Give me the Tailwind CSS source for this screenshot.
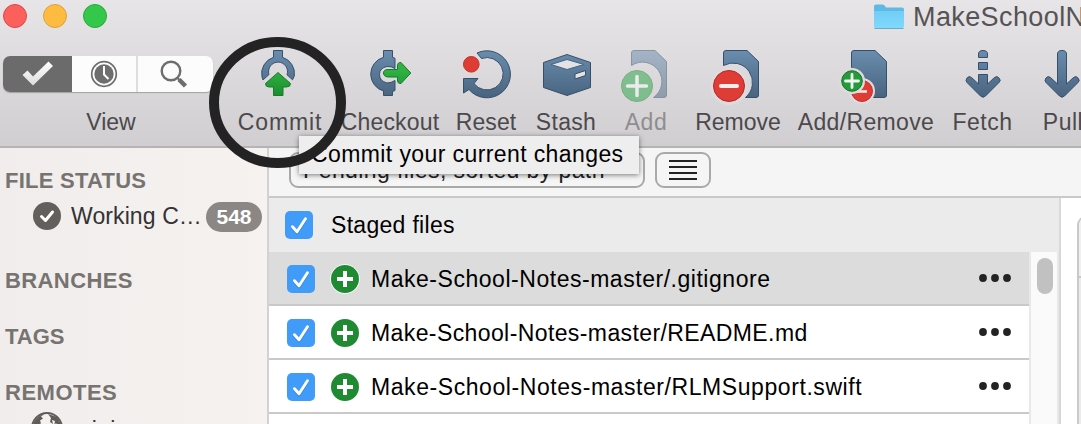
<!DOCTYPE html>
<html lang="en">
<head>
<meta charset="utf-8">
<title>MakeSchoolNotes</title>
<script src="https://cdn.jsdelivr.net/npm/@tailwindcss/browser@4"></script>
</head>
<body class="relative w-[1081px] h-[424px] overflow-hidden bg-white font-['Liberation_Sans',Arial,sans-serif] text-[23px] leading-7 text-black whitespace-nowrap">
<svg class="absolute w-0 h-0" aria-hidden="true">
  <defs>
    <linearGradient id="blue" gradientUnits="userSpaceOnUse" x1="0" y1="50" x2="0" y2="98"><stop offset="0" stop-color="#6a8dae"/><stop offset="1" stop-color="#48637f"/></linearGradient>
    <linearGradient id="green" gradientUnits="userSpaceOnUse" x1="0" y1="70" x2="0" y2="98"><stop offset="0" stop-color="#2fb243"/><stop offset="1" stop-color="#188a2a"/></linearGradient>
    <linearGradient id="folder" x1="0" y1="0" x2="0" y2="1"><stop offset="0" stop-color="#72cdf7"/><stop offset="1" stop-color="#7fd9fc"/></linearGradient>
    <linearGradient id="tick" x1="0" y1="0" x2="0" y2="1"><stop offset="0" stop-color="#fff"/><stop offset="1" stop-color="#dcdcdc"/></linearGradient>
    <symbol id="checkbox" viewBox="0 0 28 28"><rect width="28" height="28" rx="5" fill="#419bf9"/><path d="M7.5 17 12 22 20.5 9" fill="none" stroke="#1f74cf" stroke-opacity=".5" stroke-width="3" stroke-linecap="round" stroke-linejoin="round"/><path d="M7.5 15.700 12 20.800 20.500 7.800" fill="none" stroke="#fff" stroke-width="2.900" stroke-linecap="round" stroke-linejoin="round"/></symbol>
    <symbol id="plus" viewBox="0 0 30 30"><circle cx="15" cy="15" r="14.800" fill="#fff"/><circle cx="15" cy="15" r="14" fill="#208a33"/><path d="M15 7v16M7 15h16" stroke="#fff" stroke-width="4"/></symbol>
    <symbol id="dots" viewBox="0 0 32 8"><g fill="#232323"><circle cx="4" cy="4" r="3.900"/><circle cx="16" cy="4" r="3.900"/><circle cx="28" cy="4" r="3.900"/></g></symbol>
  </defs>
</svg>

<div class="flex h-full flex-col">
  <header class="h-[148px] shrink-0 overflow-hidden border-b-2 border-[#b5b3b5] bg-linear-to-b from-[#e7e5e7] to-[#d0ced1] text-[#4b494b]">
    <div class="flex h-[46px] items-start">
      <div class="flex gap-4 pl-[3px] pt-1">
        <span class="size-6 rounded-full border border-[#e2463f] bg-[#fc605c]"></span>
        <span class="size-6 rounded-full border border-[#dfa03a] bg-[#fdbc40]"></span>
        <span class="size-6 rounded-full border border-[#27ab35] bg-[#34c84a]"></span>
      </div>
      <div class="ml-[766px] flex">
        <svg class="mt-[3px] h-[26px] w-8 shrink-0" viewBox="0 0 32 26"><path d="M1 3.500Q1 1.500 3 1.500h6.500Q11 1.500 12 3l1 1.500h16q2 0 2 2V10H1z" fill="#5fb9e4"/><path d="M1 8h30v15.500q0 1.500-1.500 1.500h-27Q1 25 1 23.500z" fill="url(#folder)"/><path d="M1.500 25.500h29" stroke="#6fa9c4" stroke-width="1"/></svg>
        <span class="ml-2 mt-px text-[27px] leading-8 tracking-[0.4px] text-[#555355]">MakeSchoolNotes</span>
      </div>
    </div>
    <div class="flex h-[90px]">
      <div class="flex w-[232px] shrink-0 flex-col pl-[3px] pt-[10px]">
        <div class="flex h-9 w-[210px] overflow-hidden rounded-[7px] bg-[#fcfcfc] shadow-[0_1px_1px_rgba(0,0,0,0.25)]">
          <span class="w-[69px] bg-[#6b6b6b]"><svg class="size-full" viewBox="3 56 69 36"><path d="M22.500 75 27.500 70.500 33 76.500 48.500 61.500 53 66 33 85.500z" fill="url(#tick)"/></svg></span>
          <span class="w-[66px] border-r-2 border-[#dedede]"><svg class="size-full" viewBox="72 56 64 36"><circle cx="104" cy="74" r="12.300" fill="none" stroke="#6e6e6e" stroke-width="1.700"/><circle cx="104" cy="74" r="9.700" fill="#6e6e6e"/><path d="M104 66v8.500l4.500 4.500" stroke="#fcfcfc" stroke-width="2" fill="none"/></svg></span>
          <span class="w-[75px]"><svg class="size-full" viewBox="138 56 75 36"><circle cx="171" cy="71" r="9.300" fill="none" stroke="#6e6e6e" stroke-width="2.400"/><path d="m177.500 78 2.500 2.500" stroke="#6e6e6e" stroke-width="2"/><path d="m179 79.500 6.500 6.500" stroke="#6e6e6e" stroke-width="4.500"/></svg></span>
        </div>
        <span class="mt-4 w-[216px] text-center">View</span>
      </div>
      <div class="flex w-24 shrink-0 flex-col items-center">
        <svg class="h-[62px] w-14 shrink-0" viewBox="252 46 56 62"><path d="M273.500 50.500h9v6.800A17 17 0 0 1 294.300 76l-1.800 3.800-5.500-5A9.500 9.500 0 1 0 269 74.500l-6 5.500-1-3A17 17 0 0 1 273.500 57.300z" fill="url(#blue)" stroke="#365069"/><path d="M278 72.500 290.500 83.500Q290.500 87 286.500 87h-3.500v8.500h-9.500V87H269Q265.500 87 265.500 83.500z" fill="url(#green)" stroke="#187b29" stroke-linejoin="round"/></svg>
        <span class="tracking-[0.9px]">Commit</span>
      </div>
      <div class="flex w-[124px] shrink-0 flex-col items-center">
        <svg class="h-[62px] w-14 shrink-0" viewBox="362 46 56 62"><path d="M383.500 50.500h9v6.800l2.500 1v10.200q-4-2.500-8-2-7.500 1.500-7.500 8t7.500 8.500q4 0 8-2.500v10l-2.500 1v4h-9v-4.500A17.500 17.500 0 0 1 383.500 57.300z" fill="url(#blue)" stroke="#365069"/><path d="M388 69.500h9.500V66q0-4 3.500-3.500L410.800 73 401 83.500q-3.500.5-3.500-3.500V77H388q-4.500-.5-4.500-4t4.500-3.500z" fill="url(#green)" stroke="#187b29" stroke-linejoin="round"/></svg>
        <span class="tracking-[0.15px]">Checkout</span>
      </div>
      <div class="flex w-[68px] shrink-0 flex-col items-center">
        <svg class="h-[62px] w-14 shrink-0" viewBox="458 46 56 62"><path d="M477 53A23.500 23.500 0 1 1 469 89.500L463.500 93V78.500h14.500L474 83.500A16.200 16.200 0 1 0 481.500 58.500z" fill="url(#blue)" stroke="#365069" stroke-linejoin="round"/><circle cx="471.300" cy="64.300" r="7.800" fill="#df3d33" stroke="#c32e28"/></svg>
        <span class="tracking-[0.1px]">Reset</span>
      </div>
      <div class="flex w-[92px] shrink-0 flex-col items-center">
        <svg class="h-[62px] w-14 shrink-0" viewBox="538 46 56 62"><path d="M567 54.500 590.500 62.500V87.500L567 95.500 543.500 87.500V62.500z" fill="url(#blue)" stroke="#365069" stroke-linejoin="round"/><path d="M567 59.500 584 64.500 567 69.500 551 64.500z" fill="#e3e2e5" stroke="#48657f"/><path d="M575 74 585.500 70.500V75.500L575 79z" fill="#e3e2e5" stroke="#365069"/></svg>
        <span class="tracking-[0.3px]">Stash</span>
      </div>
      <div class="flex w-[68px] shrink-0 flex-col items-center opacity-50">
        <svg class="h-[62px] w-14 shrink-0" viewBox="618 46 56 62"><path d="M631.500 65.500V53q0-2.500 2.500-2.500h21L666.500 61.500V95q0 2.500-2.500 2.500H653.500A19 19 0 0 0 631.500 65.500z" fill="url(#blue)" stroke="#365069"/><circle cx="637" cy="86" r="15.500" fill="#27a544" stroke="#188a2a"/><path d="M637 76.500v19M627.500 86h19" stroke="#fff" stroke-width="3.500" stroke-linecap="round"/></svg>
        <span class="tracking-[0.5px]">Add</span>
      </div>
      <div class="flex w-[116px] shrink-0 flex-col items-center">
        <svg class="h-[62px] w-14 shrink-0" viewBox="710 46 56 62"><path d="M723.500 65.500V53q0-2.500 2.500-2.500h21L758.500 61.500V95q0 2.500-2.500 2.500H745.500A19.500 19.500 0 0 0 723.500 65.500z" fill="url(#blue)" stroke="#365069"/><circle cx="729" cy="86" r="19" fill="#dddbde"/><circle cx="729" cy="86" r="15.500" fill="#de3c34" stroke="#b72a28"/><path d="M721 86h16" stroke="#f3eeee" stroke-width="4" stroke-linecap="round"/></svg>
        <span class="tracking-[0px]">Remove</span>
      </div>
      <div class="flex w-[140px] shrink-0 flex-col items-center">
        <svg class="h-[62px] w-14 shrink-0" viewBox="838 46 56 62"><path d="M851.500 67V53q0-2.500 2.500-2.500h21L886.500 61.500V95q0 2.500-2.500 2.500H873z" fill="url(#blue)" stroke="#365069"/><circle cx="862" cy="91" r="13" fill="#dddbde"/><circle cx="862" cy="91" r="10.500" fill="#de3c34" stroke="#c52f29"/><path d="M856 91.500h11" stroke="#f3eeee" stroke-width="2.500"/><circle cx="852" cy="81" r="13" fill="#dddbde"/><circle cx="852" cy="81" r="10.300" fill="#229b38" stroke="#17752a"/><path d="M852 74.500v13M845.500 81h13" stroke="#f3f3f3" stroke-width="2.800" stroke-linecap="round"/></svg>
        <span class="tracking-[0.35px]">Add/Remove</span>
      </div>
      <div class="flex w-[93px] shrink-0 flex-col items-center">
        <svg class="h-[62px] w-14 shrink-0" viewBox="954 46 56 62"><g fill="url(#blue)" stroke="#365069" stroke-linejoin="round"><path d="M977.500 57.500V54q0-3.500 4.500-3.500t4.500 3.500v3.500z"/><path d="M977.500 62.500h9v7h-9z"/><path d="M977.500 74.500h9v9.500l7-6.500q2.500-2 4.500.5 2.500 2.500 0 4.500L984.500 96q-2.500 2.500-5 0L966 82.500q-2-2 0-4.500 2-2.500 4.500-.5l7 6.500z"/></g></svg>
        <span class="tracking-[0.5px]">Fetch</span>
      </div>
      <div class="flex w-[66px] shrink-0 flex-col items-center">
        <svg class="h-[62px] w-14 shrink-0" viewBox="1034 46 56 62"><path d="M1057.500 54q0-3.500 4.500-3.500t4.500 3.500v30l7-6.500q2.500-2 4.500.5 2.500 2.500 0 4.500L1064.500 96q-2.500 2.500-5 0L1046 82.500q-2-2 0-4.500 2-2.500 4.500-.5l7 6.500z" fill="url(#blue)" stroke="#365069"/></svg>
        <span class="pl-[2px] tracking-[0.5px]">Pull</span>
      </div>
    </div>
  </header>

  <div class="flex min-h-0 flex-1">
    <aside class="w-[269px] shrink-0 overflow-hidden border-r-2 border-[#d3d1d1] bg-linear-to-r from-[#f0edec] to-[#f6f2f0] pl-[5px] pt-[19px] text-[22px] font-bold text-[#767370]">
      <h2 class="h-7 tracking-[0.25px]">FILE STATUS</h2>
      <div class="flex h-[72px] items-start pl-7 pt-[7px] text-[23px] font-normal text-[#333]">
        <svg class="size-7 shrink-0" viewBox="0 0 28 28"><circle cx="14" cy="14" r="14" fill="#625f5c"/><path d="m8.500 14.500 4 4L19.500 10" fill="none" stroke="#fff" stroke-width="3" stroke-linecap="round" stroke-linejoin="round"/></svg>
        <span class="ml-[10px] w-[135px] tracking-[0.1px]">Working C…</span>
        <span class="h-[30px] w-14 rounded-full bg-[#8b8784] text-center text-[21px] font-bold leading-[30px] text-white">548</span>
      </div>
      <h2 class="h-14 tracking-[0.4px]">BRANCHES</h2>
      <h2 class="h-14">TAGS</h2>
      <h2 class="h-7 tracking-[0.5px]">REMOTES</h2>
      <div class="flex items-start pl-[26px] pt-[5px] text-[23px] font-normal text-[#333]">
        <svg class="size-8 shrink-0" viewBox="0 0 32 32"><circle cx="16" cy="16" r="15" fill="#f4f1ef" stroke="#5f5c5a" stroke-width="2"/><path d="M3 10Q7 3 14 1.500l-4 3 2 2-3 2 1 3-3 1-1 5-5-1zM17 2l9 3 4 7-2 4-3-5-2 3 1-5-3-1 1 4-3-2 1-4z" fill="#5f5c5a"/></svg>
        <span class="ml-2 mt-[4px] tracking-[0.2px]">origin</span>
      </div>
    </aside>

    <main class="flex min-w-0 flex-1 flex-col">
      <div class="flex h-[50px] shrink-0 items-start gap-[10px] border-b-2 border-[#c9c9c9] bg-[#f5f5f5] pl-5 pt-1">
        <div class="h-9 w-[356px] rounded-[9px] border-2 border-[#a9a9a9] pl-3 pt-[2px] tracking-[0.4px] text-[#222]">Pending files, sorted by path</div>
        <div class="flex h-9 w-14 flex-col items-center gap-1 rounded-[9px] border-2 border-[#a9a9a9] pt-[6px]">
          <i class="h-[2px] w-7 bg-[#222]"></i><i class="h-[2px] w-7 bg-[#222]"></i><i class="h-[2px] w-7 bg-[#222]"></i><i class="h-[2px] w-7 bg-[#222]"></i>
        </div>
      </div>
      <div class="flex min-h-0 flex-1">
        <section class="flex w-[790px] shrink-0 flex-col">
          <div class="flex h-[54px] shrink-0 items-center bg-[#ebebeb] pl-4">
            <svg class="size-7"><use href="#checkbox"/></svg>
            <span class="ml-[18px] tracking-[0.3px]">Staged files</span>
          </div>
          <div class="flex min-h-0 flex-1">
            <div class="w-[760px] shrink-0">
              <div class="flex h-[54px] items-center border-b-2 border-[#c9c9c9] bg-[#dcdcdc] pl-[18px] pt-[2px]">
                <svg class="size-7"><use href="#checkbox"/></svg><svg class="ml-[15px] size-[30px]"><use href="#plus"/></svg>
                <span class="ml-[11px] flex-1 tracking-[0.53px]">Make-School-Notes-master/.gitignore</span>
                <svg class="mb-[2px] mr-[18px] h-2 w-8"><use href="#dots"/></svg>
              </div>
              <div class="flex h-[54px] items-center border-b-2 border-[#c9c9c9] pl-[18px] pt-[2px]">
                <svg class="size-7"><use href="#checkbox"/></svg><svg class="ml-[15px] size-[30px]"><use href="#plus"/></svg>
                <span class="ml-[11px] flex-1 tracking-[0.4px]">Make-School-Notes-master/README.md</span>
                <svg class="mb-[2px] mr-[18px] h-2 w-8"><use href="#dots"/></svg>
              </div>
              <div class="flex h-[54px] items-center border-b-2 border-[#c9c9c9] pl-[18px] pt-[2px]">
                <svg class="size-7"><use href="#checkbox"/></svg><svg class="ml-[15px] size-[30px]"><use href="#plus"/></svg>
                <span class="ml-[11px] flex-1 tracking-[0.57px]">Make-School-Notes-master/RLMSupport.swift</span>
                <svg class="mb-[2px] mr-[18px] h-2 w-8"><use href="#dots"/></svg>
              </div>
            </div>
            <div class="flex w-[30px] items-start border-x-2 border-[#e8e8e8] bg-[#fafafa] pl-[6px] pt-[6px]"><span class="h-9 w-4 rounded-full bg-[#c1c1c1]"></span></div>
          </div>
        </section>
        <section class="flex-1 overflow-hidden border-l-2 border-[#d8d8d8] pl-[16px] pt-[18px]">
          <div class="h-[220px] w-10 rounded-tl-[9px] border-2 border-[#c9c9c9] bg-[#ebebeb]"><div class="h-[60px] rounded-tl-[7px] border-b-2 border-[#c9c9c9] bg-[#f0f0f0]"></div></div>
        </section>
      </div>
    </main>
  </div>
</div>

<div class="absolute left-[299px] top-[136px] h-[38px] w-[340px] bg-[#eee] pl-[12px] pt-[4px] tracking-[0.4px] shadow-[0_1px_5px_rgba(0,0,0,0.5)]">Commit your current changes</div>
<svg class="absolute left-[207px] top-[35px] h-[136px] w-[142px]" viewBox="207 35 142 136"><ellipse cx="277.500" cy="102.500" rx="63.500" ry="60.500" fill="none" stroke="#232323" stroke-width="10"/></svg>
</body>
</html>
